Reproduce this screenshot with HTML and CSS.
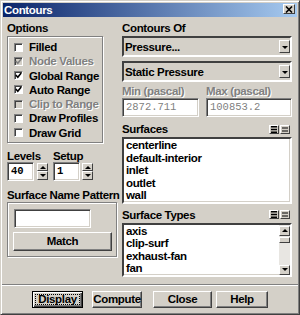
FILE: index.html
```html
<!DOCTYPE html>
<html lang="en">
<head>
  <meta charset="UTF-8" />
  <title>Contours</title>
  <link rel="stylesheet" href="styles.css">
</head>
<body>
  <div class="window">
    <div class="titlebar">
      <span class="title">Contours</span>
      <span class="close-btn">
        <svg width="8" height="7" viewBox="0 0 8 7"><path d="M1 0.5 L7 6.5 M7 0.5 L1 6.5" stroke="#000" stroke-width="1.6" /></svg>
      </span>
    </div>

    <div class="body">
      <div class="col-left">
        <div class="label">Options</div>
        <div class="group options">
          <div class="check-row"><span class="checkbox"></span>Filled</div>
          <div class="check-row disabled">
            <span class="checkbox"><svg width="7" height="7" viewBox="0 0 7 7"><path d="M0.8 3 L2.8 5.2 L6.2 1" /></svg></span>Node Values
          </div>
          <div class="check-row">
            <span class="checkbox"><svg width="7" height="7" viewBox="0 0 7 7"><path d="M0.8 3 L2.8 5.2 L6.2 1" /></svg></span>Global Range
          </div>
          <div class="check-row">
            <span class="checkbox"><svg width="7" height="7" viewBox="0 0 7 7"><path d="M0.8 3 L2.8 5.2 L6.2 1" /></svg></span>Auto Range
          </div>
          <div class="check-row disabled"><span class="checkbox"></span>Clip to Range</div>
          <div class="check-row"><span class="checkbox"></span>Draw Profiles</div>
          <div class="check-row"><span class="checkbox"></span>Draw Grid</div>
        </div>

        <div class="spin-row">
          <div class="spin-field">
            <div class="small-label">Levels</div>
            <div class="spin-box">
              <div class="field num">40</div>
              <div class="spinner"><span class="half"><i class="tri-up"></i></span><span class="half"><i class="tri-down"></i></span></div>
            </div>
          </div>
          <div class="spin-field">
            <div class="small-label">Setup</div>
            <div class="spin-box">
              <div class="field num">1</div>
              <div class="spinner"><span class="half"><i class="tri-up"></i></span><span class="half"><i class="tri-down"></i></span></div>
            </div>
          </div>
        </div>

        <div class="label pattern-label">Surface Name Pattern</div>
        <div class="group pattern">
          <div class="field pattern-input"></div>
          <div class="btn match">Match</div>
        </div>
      </div>

      <div class="col-right">
        <div class="label">Contours Of</div>
        <div class="dropdown first">
          <span>Pressure...</span>
          <span class="drop-btn"><i class="tri-down"></i></span>
        </div>
        <div class="dropdown second">
          <span>Static Pressure</span>
          <span class="drop-btn"><i class="tri-down"></i></span>
        </div>

        <div class="range-row">
          <div class="range min">
            <div class="label disabled">Min (pascal)</div>
            <div class="field value">2872.711</div>
          </div>
          <div class="range max">
            <div class="label disabled">Max (pascal)</div>
            <div class="field value">100853.2</div>
          </div>
        </div>

        <div class="list-head surfaces-head">
          <span class="label">Surfaces</span>
          <span class="list-tools">
            <span class="tool"><svg width="6" height="7" viewBox="0 0 6 7"><rect x="0" y="0" width="6" height="1.5" /><rect x="0" y="2.75" width="6" height="1.5" /><rect x="0" y="5.5" width="6" height="1.5" /></svg></span>
            <span class="tool"><svg width="6" height="7" viewBox="0 0 6 7"><rect x="0" y="1.5" width="6" height="1" /><rect x="0" y="4.5" width="6" height="1" /></svg></span>
          </span>
        </div>
        <div class="list surfaces">
          <div class="item">centerline</div>
          <div class="item">default-interior</div>
          <div class="item">inlet</div>
          <div class="item">outlet</div>
          <div class="item">wall</div>
        </div>

        <div class="list-head types-head">
          <span class="label">Surface Types</span>
          <span class="list-tools">
            <span class="tool"><svg width="6" height="7" viewBox="0 0 6 7"><rect x="0" y="0" width="6" height="1.5" /><rect x="0" y="2.75" width="6" height="1.5" /><rect x="0" y="5.5" width="6" height="1.5" /></svg></span>
            <span class="tool"><svg width="6" height="7" viewBox="0 0 6 7"><rect x="0" y="1.5" width="6" height="1" /><rect x="0" y="4.5" width="6" height="1" /></svg></span>
          </span>
        </div>
        <div class="list types">
          <div class="items">
            <div class="item">axis</div>
            <div class="item">clip-surf</div>
            <div class="item">exhaust-fan</div>
            <div class="item">fan</div>
          </div>
          <div class="scrollbar">
            <span class="sb-btn"><i class="tri-up"></i></span>
            <span class="sb-thumb"></span>
            <span class="sb-track"></span>
            <span class="sb-btn"><i class="tri-down"></i></span>
          </div>
        </div>
      </div>
    </div>

    <div class="separator"></div>

    <div class="buttons">
      <div class="btn default display"><span class="focus">Display</span></div>
      <div class="btn compute">Compute</div>
      <div class="btn close">Close</div>
      <div class="btn help">Help</div>
    </div>
  </div>
</body>
</html>
```

FILE: styles.css
```css
body {
  margin: 0;
  font-family: 'Liberation Sans', Arial, sans-serif;
  font-size: 11.5px;
  letter-spacing: -0.35px;
  font-weight: bold;
  color: #000;
  background: #d4d0c8;
}
.window {
  width: 300px;
  height: 315px;
  box-sizing: border-box;
  background: #d4d0c8;
  border: 1px solid;
  border-color: #d4d0c8 #404040 #404040 #d4d0c8;
  box-shadow: inset 1px 1px #fff, inset -1px -1px #808080;
}
.titlebar {
  display: flex;
  justify-content: space-between;
  align-items: flex-start;
  height: 14px;
  margin: 2px 2px 0;
  background: linear-gradient(to right, #0a246a, #a6caf0);
}
.title {
  color: #fff;
  line-height: 14px;
  padding-left: 1px;
}
.close-btn {
  display: flex;
  align-items: center;
  justify-content: center;
  width: 12px;
  height: 10px;
  margin: 1px 2px 0 0;
  box-sizing: border-box;
  background: #d4d0c8;
  border: 1px solid;
  border-color: #fff #404040 #404040 #fff;
}

/* layout */
.body {
  display: flex;
  align-items: flex-start;
  gap: 5px;
  padding: 4px 7px 0 6px;
}
.col-left {
  width: 110px;
}
.col-right {
  width: 170px;
}
.label {
  line-height: 14px;
  height: 14px;
  white-space: nowrap;
}
.disabled {
  color: #808080;
  text-shadow: 1px 1px 0 #fff;
}

/* etched group box */
.group {
  border: 1px solid #808080;
  box-shadow: 1px 1px 0 #fff, inset 1px 1px 0 #fff;
}
.options {
  width: 96px;
  box-sizing: border-box;
  margin-top: 1px;
  padding: 3px 0 2px 6px;
}
.check-row {
  display: flex;
  align-items: center;
  gap: 6px;
  height: 14.25px;
  white-space: nowrap;
}
.checkbox {
  display: flex;
  align-items: center;
  justify-content: center;
  width: 9px;
  height: 9px;
  box-sizing: border-box;
  background: #fff;
  border: 1px solid;
  border-color: #808080 #fff #fff #808080;
  box-shadow: inset 1px 1px #404040;
}
.checkbox svg path {
  fill: none;
  stroke: #000;
  stroke-width: 1.6;
}
.check-row.disabled .checkbox {
  background: #d4d0c8;
}
.check-row.disabled .checkbox svg path {
  stroke: #808080;
}

/* sunken field */
.field {
  box-sizing: border-box;
  background: #fff;
  border: 1px solid;
  border-color: #808080 #fff #fff #808080;
  box-shadow: inset 1px 1px #404040, inset -1px -1px #d4d0c8;
}
.num, .value {
  font-family: 'Liberation Mono', 'Courier New', monospace;
  font-size: 10.5px;
  letter-spacing: 0;
  line-height: 17px;
  padding-left: 3px;
}
.value {
  font-weight: normal;
  color: #808080;
}

/* levels / setup */
.spin-row {
  display: flex;
  gap: 5px;
  margin-top: 7px;
}
.small-label {
  line-height: 12px;
  height: 12px;
}
.spin-box {
  display: flex;
  align-items: flex-start;
  gap: 3px;
}
.spin-box .num {
  width: 27px;
  height: 19px;
}
.spin-field + .spin-field .spin-box {
  gap: 2px;
}
.spinner {
  display: flex;
  flex-direction: column;
  width: 11px;
  height: 17px;
  margin-top: 1px;
}
.half {
  flex: 1;
  display: flex;
  align-items: center;
  justify-content: center;
  box-sizing: border-box;
  border: 1px solid;
  border-color: #fff #404040 #404040 #fff;
  background: #d4d0c8;
}
.tri-up, .tri-down {
  display: block;
  width: 0;
  height: 0;
  border-left: 3px solid transparent;
  border-right: 3px solid transparent;
}
.tri-up {
  border-bottom: 3px solid #000;
}
.tri-down {
  border-top: 3px solid #000;
}

/* surface name pattern */
.pattern-label {
  margin-top: 7px;
}
.pattern {
  height: 55px;
  box-sizing: border-box;
  padding: 6px 4px 0 5px;
}
.pattern-input {
  width: 77px;
  height: 19px;
  margin-left: 1px;
}
.btn {
  display: flex;
  align-items: center;
  justify-content: center;
  box-sizing: border-box;
  background: #d4d0c8;
  border: 1px solid;
  border-color: #fff #404040 #404040 #fff;
  box-shadow: inset -1px -1px #808080;
}
.match {
  width: 99px;
  height: 19px;
  margin-top: 4px;
}

/* right side */
.dropdown {
  display: flex;
  justify-content: space-between;
  align-items: center;
  height: 21px;
  box-sizing: border-box;
  padding: 0 0 0 1px;
  border: 2px solid;
  border-color: #404040 #fff #fff #404040;
  background: #d4d0c8;
}
.dropdown.first {
  margin-top: 1px;
}
.dropdown.second {
  margin-top: 4px;
}
.drop-btn {
  display: flex;
  align-items: flex-end;
  justify-content: center;
  width: 11px;
  height: 13px;
  padding-bottom: 3px;
  box-sizing: border-box;
  border: 1px solid;
  border-color: #fff #404040 #404040 #fff;
}
.range-row {
  display: flex;
  gap: 7px;
  margin-top: 2px;
}
.range.min {
  width: 77px;
}
.range.max {
  width: 86px;
}
.range .field {
  height: 19px;
}
.list-head {
  display: flex;
  justify-content: space-between;
  align-items: center;
  height: 14px;
}
.surfaces-head {
  margin-top: 5px;
}
.types-head {
  margin-top: 4px;
}
.list-tools {
  display: flex;
  gap: 1px;
  margin-right: 2px;
}
.tool {
  display: flex;
  align-items: center;
  justify-content: center;
  width: 10px;
  height: 9px;
  box-sizing: border-box;
  border: 1px solid;
  border-color: #fff #404040 #404040 #fff;
}
.tool svg rect {
  fill: #000;
}
.list {
  margin-top: 1px;
  box-sizing: border-box;
  background: #fff;
  border: 2px solid;
  border-color: #404040 #fff #fff #404040;
  box-shadow: inset -1px -1px #d4d0c8;
}
.surfaces {
  height: 66.5px;
  padding-left: 2px;
}
.item {
  line-height: 12.5px;
  height: 12.5px;
  white-space: nowrap;
}
.types {
  display: flex;
  height: 54px;
  padding-left: 2px;
}
.types .items {
  flex: 1;
}
.scrollbar {
  display: flex;
  flex-direction: column;
  width: 11px;
  height: 50px;
  background: #e8e6e2;
}
.sb-btn, .sb-thumb {
  display: flex;
  align-items: center;
  justify-content: center;
  box-sizing: border-box;
  background: #d4d0c8;
  border: 1px solid;
  border-color: #fff #404040 #404040 #fff;
}
.sb-btn {
  height: 10px;
  margin-top: 1px;
}
.sb-thumb {
  height: 6px;
  margin-top: 1px;
}
.sb-track {
  flex: 1;
}

/* bottom */
.separator {
  margin: 7px 1px 0;
  border-top: 1px solid #808080;
  border-bottom: 1px solid #fff;
}
.buttons {
  display: flex;
  margin-top: 5px;
  padding-left: 31px;
}
.buttons .btn {
  height: 17px;
}
.display {
  width: 51px;
  padding: 2px;
  border-color: #000;
  box-shadow: inset 1px 1px #fff, inset -1px -1px #404040, inset -2px -2px #808080;
}
.focus {
  display: flex;
  align-items: center;
  justify-content: center;
  width: 100%;
  height: 100%;
  box-sizing: border-box;
  border: 1px dotted #000;
}
.compute {
  width: 50px;
  margin-left: 9px;
}
.close {
  width: 59px;
  margin-left: 11px;
}
.help {
  width: 52px;
  margin-left: 4px;
}
```
